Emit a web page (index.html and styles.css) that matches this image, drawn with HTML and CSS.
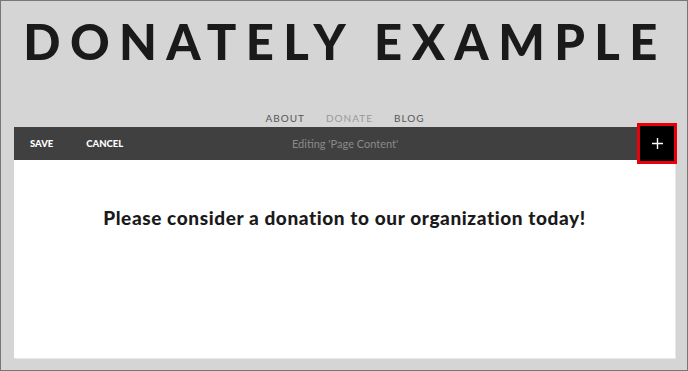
FILE: index.html
```html
<!DOCTYPE html>
<html>
<head>
<meta charset="utf-8">
<link rel="stylesheet" href="styles.css">
</head>
<body>
<div class="frame">
  <h1 class="site-title">DONATELY EXAMPLE</h1>
  <nav class="nav">
    <span class="nav-item">ABOUT</span>
    <span class="nav-item current">DONATE</span>
    <span class="nav-item">BLOG</span>
  </nav>
  <div class="editor">
    <div class="toolbar">
      <span class="tb-btn">SAVE</span>
      <span class="tb-btn">CANCEL</span>
      <span class="tb-title">Editing 'Page Content'</span>
      <div class="add-btn">
        <svg width="11" height="11" viewBox="0 0 11 11"><path d="M5.5 0V11M0 5.5H11" stroke="#fff" stroke-width="1.4"/></svg>
      </div>
    </div>
    <div class="content">
      <h2 class="headline">Please consider a donation to our organization today!</h2>
    </div>
  </div>
</div>
</body>
</html>
```
FILE: styles.css
```css
html, body { margin: 0; padding: 0; }
body { width: 688px; height: 371px; overflow: hidden; font-family: Lato, "Liberation Sans", sans-serif; }
.frame {
  box-sizing: border-box;
  width: 688px;
  height: 371px;
  border: 1px solid #777;
  background: #d5d5d5;
  padding: 0 12px 0 13px;
  display: flex;
  flex-direction: column;
}
.site-title {
  margin: 16px 0 0 0;
  padding-left: 1px;
  font-size: 49px;
  line-height: 49px;
  font-weight: 900;
  letter-spacing: 9.4px;
  color: #1a1a1a;
  text-align: center;
  white-space: nowrap;
}
.nav {
  margin-top: 45px;
  padding-left: 1px;
  display: flex;
  justify-content: center;
  gap: 21px;
  font-size: 10px;
  line-height: 14px;
  letter-spacing: 1px;
  height: 16px;
}
.nav-item { color: #555; }
.nav-item.current { color: #999; }
.editor {
  width: 661px;
  height: 231px;
  background: #fff;
  display: flex;
  flex-direction: column;
  box-shadow: 1px 1px 0 #e8e8e8;
}
.toolbar {
  height: 33px;
  background: #404040;
  display: flex;
  align-items: center;
  position: relative;
  padding-left: 16px;
}
.tb-btn {
  color: #fff;
  font-weight: 900;
  font-size: 9.5px;
  margin-right: 33px;
}
.tb-title {
  position: absolute;
  left: 278px;
  top: 0;
  line-height: 33px;
  font-size: 11px;
  color: #8a8a8a;
}
.add-btn {
  position: absolute;
  right: 1px;
  top: -1px;
  width: 34px;
  height: 35px;
  background: #000;
  display: flex;
  align-items: center;
  justify-content: center;
  outline: 3px solid #e8000b;
  outline-offset: 0;
}
.content { flex: 1; }
.headline {
  margin: 46px 0 0 0;
  text-align: center;
  font-size: 19px;
  font-weight: 900;
  letter-spacing: 0.6px;
  color: #1a1a1a;
}
```
